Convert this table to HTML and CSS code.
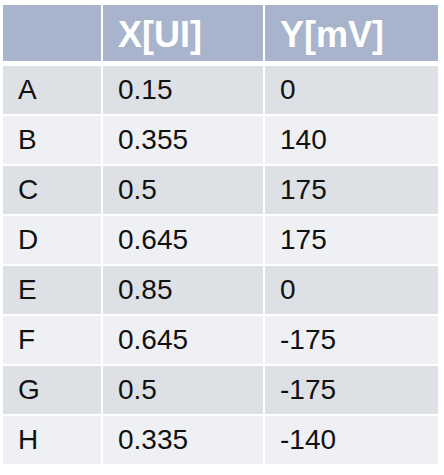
FILE: index.html
```html
<!DOCTYPE html>
<html>
<head>
<meta charset="utf-8">
<link rel="stylesheet" href="styles.css">
</head>
<body>
<div class="table">
  <div class="cell head"></div>
  <div class="cell head">X[UI]</div>
  <div class="cell head">Y[mV]</div>

  <div class="cell odd">A</div><div class="cell odd">0.15</div><div class="cell odd">0</div>
  <div class="cell even">B</div><div class="cell even">0.355</div><div class="cell even">140</div>
  <div class="cell odd">C</div><div class="cell odd">0.5</div><div class="cell odd">175</div>
  <div class="cell even">D</div><div class="cell even">0.645</div><div class="cell even">175</div>
  <div class="cell odd">E</div><div class="cell odd">0.85</div><div class="cell odd">0</div>
  <div class="cell even">F</div><div class="cell even">0.645</div><div class="cell even">-175</div>
  <div class="cell odd">G</div><div class="cell odd">0.5</div><div class="cell odd">-175</div>
  <div class="cell even">H</div><div class="cell even">0.335</div><div class="cell even">-140</div>
</div>
</body>
</html>
```
FILE: styles.css
```css
html, body {
  margin: 0;
  padding: 0;
  background: #ffffff;
}
body {
  padding: 5px 0 0 3px;
  font-family: "Liberation Sans", Arial, sans-serif;
}
.table {
  display: grid;
  grid-template-columns: 98px 160px 173px;
  grid-template-rows: 59px repeat(8, 48px);
  column-gap: 2px;
  row-gap: 2px;
  width: 435px;
}
.cell {
  display: flex;
  align-items: center;
  padding-left: 15px;
  font-size: 28px;
  color: #111111;
}
.head {
  height: 56px;
  box-sizing: border-box;
  padding-top: 3px;
  align-self: start;
  background: #a7b4cb;
  color: #ffffff;
  font-weight: bold;
  font-size: 36px;
}
.odd {
  background: #dde0e5;
}
.even {
  background: #eef0f4;
}
```
